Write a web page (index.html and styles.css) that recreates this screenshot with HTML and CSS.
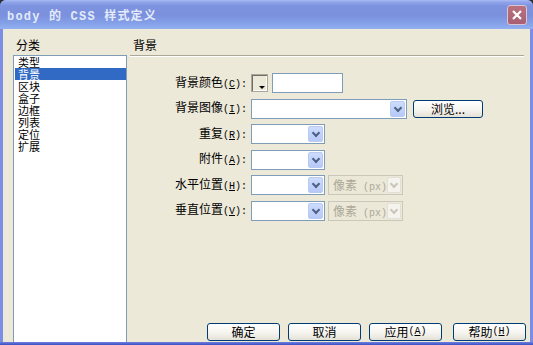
FILE: index.html
```html
<!DOCTYPE html>
<html lang="zh">
<head>
<meta charset="utf-8">
<title>body 的 CSS 样式定义</title>
<link rel="stylesheet" href="styles.css">
</head>
<body>
<div class="window">
  <div class="titlebar">
    <span class="title">body 的 CSS 样式定义</span>
    <div class="close">
      <svg width="12" height="12" viewBox="0 0 12 12"><path d="M2 2 L10 10 M10 2 L2 10" stroke="#fff" stroke-width="2.2" fill="none"/></svg>
    </div>
  </div>
  <div class="frame">
    <div class="client">
      <div class="sidebar">
        <div class="cap">分类</div>
        <ul class="list">
          <li>类型</li>
          <li class="on">背景</li>
          <li>区块</li>
          <li>盒子</li>
          <li>边框</li>
          <li>列表</li>
          <li>定位</li>
          <li>扩展</li>
        </ul>
      </div>
      <div class="main">
        <div class="cap head">背景</div>
        <div class="form">
          <label class="lbl">背景颜色<span class="k">(<u>C</u>):</span></label>
          <div class="field">
            <div class="swatch"></div>
            <div class="input"></div>
          </div>

          <label class="lbl">背景图像<span class="k">(<u>I</u>):</span></label>
          <div class="field">
            <div class="select wide"><span class="val"></span><span class="arrow"></span></div>
            <div class="btn browse">浏览...</div>
          </div>

          <label class="lbl">重复<span class="k">(<u>R</u>):</span></label>
          <div class="field">
            <div class="select"><span class="val"></span><span class="arrow"></span></div>
          </div>

          <label class="lbl">附件<span class="k">(<u>A</u>):</span></label>
          <div class="field">
            <div class="select"><span class="val"></span><span class="arrow"></span></div>
          </div>

          <label class="lbl">水平位置<span class="k">(<u>H</u>):</span></label>
          <div class="field">
            <div class="select"><span class="val"></span><span class="arrow"></span></div>
            <div class="select dis"><span class="val">像素<span class="k"> (px)</span></span><span class="arrow"></span></div>
          </div>

          <label class="lbl">垂直位置<span class="k">(<u>V</u>):</span></label>
          <div class="field">
            <div class="select"><span class="val"></span><span class="arrow"></span></div>
            <div class="select dis"><span class="val">像素<span class="k"> (px)</span></span><span class="arrow"></span></div>
          </div>
        </div>
        <div class="buttons">
          <div class="btn">确定</div>
          <div class="btn">取消</div>
          <div class="btn gap">应用<span class="k">(<u>A</u>)</span></div>
          <div class="btn">帮助<span class="k">(<u>H</u>)</span></div>
        </div>
      </div>
    </div>
  </div>
  <div class="bottom"></div>
</div>
</body>
</html>
```
FILE: styles.css
```css
* { box-sizing: border-box; }
html, body { margin: 0; padding: 0; background: #2e2e2e; }
body {
  width: 533px; height: 345px; overflow: hidden;
  font-family: "Noto Sans CJK SC", "Noto Sans", sans-serif;
  font-size: 12px; color: #000;
}
.window {
  width: 533px; height: 345px;
  display: flex; flex-direction: column;
  border-radius: 6px 6px 0 0; overflow: hidden;
  background: #7b8de4;
}
.titlebar {
  height: 29px; flex: none;
  display: flex; align-items: center;
  padding: 1px 6px 0 7px;
  background: linear-gradient(#aabcf3 0, #90a5eb 2px, #7d93df 6px, #7a90dd 15px, #84a0e8 23px, #93b0f1 29px);
}
.title {
  flex: 1;
  font-family: "Liberation Mono", "Noto Sans CJK SC", monospace;
  font-weight: bold; font-size: 12px; letter-spacing: 1.2px;
  color: #e3eafa;
}
.close {
  width: 20px; height: 20px; margin-top: -1px;
  border: 1px solid #dcc3d2; border-radius: 3px;
  background: linear-gradient(#b9727f, #a95f72);
  display: flex; align-items: center; justify-content: center;
}
.frame { flex: 1; min-height: 0; display: flex; padding: 0 3px; }
.bottom { height: 3px; flex: none; background: linear-gradient(#6f80de, #3a4fc4); }
.client { flex: 1; display: flex; background: #ece9d8; min-height: 0; }

.sidebar { width: 124px; flex: none; padding: 9px 0 0 10px; display: flex; flex-direction: column; }
.cap { padding-left: 3px; height: 17px; line-height: 14px; }
.list {
  flex: 1; margin: 0; padding: 0; list-style: none;
  width: 114px; background: #fff;
  border: 1px solid #7f9db9; border-bottom: none;
}
.list li {
  height: 12px; line-height: 12px; font-size: 11px;
  margin-left: 1px; padding-left: 3px;
}
.list li.on { background: #316ac5; color: #fff; }

.main { flex: 1; display: flex; flex-direction: column; padding: 9px 6px 0 3px; }
.head { height: 18px; border-bottom: 1px solid #aca899; box-shadow: 0 1px 0 #fff; }

.form {
  display: grid;
  grid-template-columns: 117px auto;
  grid-auto-rows: 20px;
  column-gap: 4px; row-gap: 5.5px;
  margin-top: 17px;
  align-items: center; justify-content: start;
}
.lbl { text-align: right; white-space: nowrap; line-height: 14px; }
.k { font-family: "Liberation Mono", monospace; font-size: 10px; }
.field { display: flex; align-items: center; height: 20px; }

.swatch {
  width: 17px; height: 18px; margin-right: 4px; position: relative;
  border: 1px solid #a9a79b; background: #ece9d8;
  box-shadow: inset 1px 1px 0 #716f64, inset -1px -1px 0 #fff;
}
.swatch::after {
  content: ""; position: absolute; right: 2px; bottom: 2px;
  border-left: 3px solid transparent; border-right: 3px solid transparent;
  border-top: 3px solid #000;
}
.input { width: 71px; height: 20px; border: 1px solid #7f9db9; background: #fff; }

.select {
  width: 74px; height: 20px; padding: 1px;
  display: flex; justify-content: space-between; align-items: stretch;
  border: 1px solid #7f9db9; background: #fff;
}
.select.wide { width: 156px; }
.select.dis { width: 75px; margin-left: 3px; border-color: #cac8bb; background: #ebe8d7; }
.val { line-height: 16px; padding-left: 3px; white-space: nowrap; }
.dis .val { color: #aca899; }
.arrow {
  width: 15px; height: 16px; border-radius: 2px;
  border: 1px solid #b9cbf3;
  background: linear-gradient(#cddbfd, #b6c9f7);
  display: flex; align-items: center; justify-content: center;
}
.arrow::after {
  content: ""; width: 4px; height: 4px;
  border-right: 2px solid #4d6185; border-bottom: 2px solid #4d6185;
  transform: translateY(-1px) rotate(45deg);
}
.dis .arrow { border-color: #e3e1d7; background: #f4f3ee; }
.dis .arrow::after { border-color: #c9c7ba; }

.btn {
  width: 73px; height: 18px;
  border: 1px solid #003c74; border-radius: 3px;
  background: linear-gradient(#ffffff, #f5f4ef 55%, #e4e1d6);
  display: flex; align-items: center; justify-content: center;
  line-height: 14px; white-space: nowrap;
}
.browse { width: 70px; margin-left: 6px; }
.buttons {
  margin-top: auto; margin-right: -2px;
  display: flex; justify-content: flex-end; gap: 8px;
  padding-bottom: 1px;
}
.buttons .gap { margin-right: 3px; }
```
